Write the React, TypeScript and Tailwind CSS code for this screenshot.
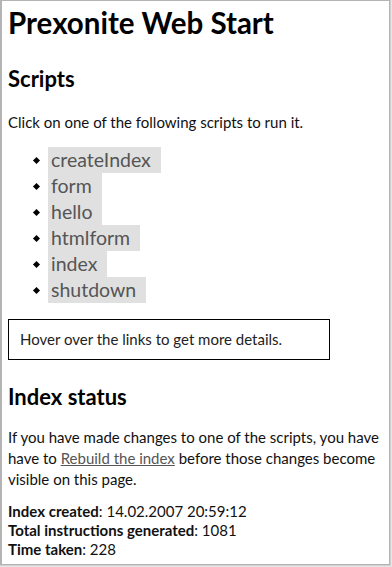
const scripts = ["createIndex", "form", "hello", "htmlform", "index", "shutdown"];

export default function App() {
  return (
    <div className="h-[567px] overflow-hidden bg-[#e6e6e6] pr-[1px] pb-[1px]">
      <div className="h-full bg-[#d0d0d0] pr-[1px] pb-[1px]">
        <div className="h-full bg-[#b4b4b4] pl-[2px] pt-[1px] pr-[1px] pb-[1px]">
          <div
            className="h-full bg-white pl-[6px] pr-[8px] pt-[4px] text-[15px] leading-[21px] text-[#111]"
            style={{ fontFamily: "Lato, 'Liberation Sans', sans-serif" }}
          >
            <h1 className="text-[29.5px] font-bold leading-[36px] text-black">Prexonite Web Start</h1>

            <h2 className="mt-[24px] text-[22px] font-bold leading-[28px] text-black">Scripts</h2>

            <p className="mt-[19px]">Click on one of the following scripts to run it.</p>

            <ul className="mt-[14px] pl-[26px]">
              {scripts.map((s) => (
                <li key={s} className="flex h-[26px] items-center">
                  <span className="mr-[9px] h-[5px] w-[5px] rotate-45 bg-black" />
                  <span className="inline-block h-[26px] bg-[#e0e0e0] pl-[3px] pr-[10px] text-[19.5px] leading-[26px] text-[#555]">
                    {s}
                  </span>
                </li>
              ))}
            </ul>

            <div className="mt-[16px] w-[322px] border border-black px-[11px] py-[10px] leading-[19px] text-[#222]">
              Hover over the links to get more details.
            </div>

            <h2 className="mt-[23px] text-[22px] font-bold leading-[28px] text-black">Index status</h2>

            <p className="mt-[16px]">
              If you have made changes to one of the scripts, you have have to{" "}
              <a className="text-[#555] underline">Rebuild the index</a> before those changes become
              visible on this page.
            </p>

            <p className="mt-[12px] leading-[19px]">
              <b>Index created</b>: 14.02.2007 20:59:12
              <br />
              <b>Total instructions generated</b>: 1081
              <br />
              <b>Time taken</b>: 228
            </p>
          </div>
        </div>
      </div>
    </div>
  );
}
